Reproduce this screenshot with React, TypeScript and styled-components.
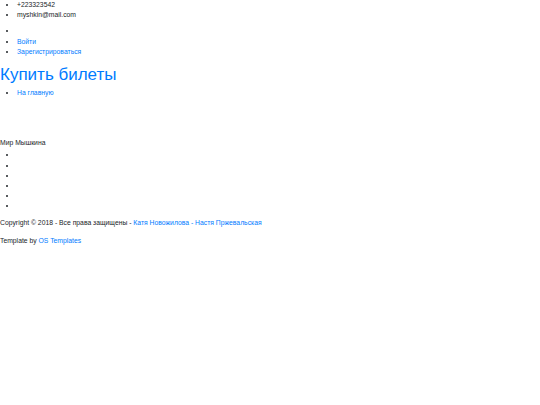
import { FunctionComponent } from 'react';
import styled, { createGlobalStyle } from 'styled-components';

const GlobalStyle = createGlobalStyle`
  html, body {
    margin: 0;
    padding: 0;
    background: #ffffff;
  }
  body {
    font-family: "Liberation Sans", Arial, sans-serif;
    font-size: 6.8px;
    line-height: 10.2px;
    color: #212529;
  }
`;

const socials = ['', '', '', '', '', ''];

const App: FunctionComponent = () => (
  <>
    <GlobalStyle/>
    <Header>
      <List>
        <li>+223323542</li>
        <li>myshkin@mail.com</li>
      </List>
      <List spaced>
        <li/>
        <li><Link href="#">Войти</Link></li>
        <li><Link href="#">Зарегистрироваться</Link></li>
      </List>
    </Header>
    <Main>
      <Title>Купить билеты</Title>
      <List>
        <li><Link href="#">На главную</Link></li>
      </List>
    </Main>
    <Footer>
      <Brand>Мир Мышкина</Brand>
      <List>
        { socials.map((s, index) => <li key={ `social-${ index }` }>{ s }</li>) }
      </List>
      <Copy first>
        Copyright © 2018 - Все права защищены - <Link href="#">Катя Новожилова - Настя Пржевальская</Link>
      </Copy>
      <Copy>
        Template by <Link href="#">OS Templates</Link>
      </Copy>
    </Footer>
  </>
);

export default App;

const Header = styled.header`
  display: flex;
  flex-direction: column;
`;

const Main = styled.main`
  display: flex;
  flex-direction: column;
`;

const Footer = styled.footer`
  display: flex;
  flex-direction: column;
  padding-top: 40px;
`;

const List = styled.ul<{ spaced?: boolean }>`
  margin: ${ ({ spaced }) => spaced ? '6px 0 0' : '0' };
  padding-left: 17px;
  list-style: disc;

  li {
    min-height: 10.2px;
  }
`;

const Link = styled.a`
  color: #007bff;
  text-decoration: none;
`;

const Title = styled.h1`
  margin: 6px 0 1px;
  font-size: 17px;
  line-height: 24px;
  font-weight: 400;
  color: #007bff;
`;

const Brand = styled.div`
  margin-bottom: 2px;
`;

const Copy = styled.p<{ first?: boolean }>`
  margin: ${ ({ first }) => first ? '6px 0 0' : '8px 0 0' };
`;
